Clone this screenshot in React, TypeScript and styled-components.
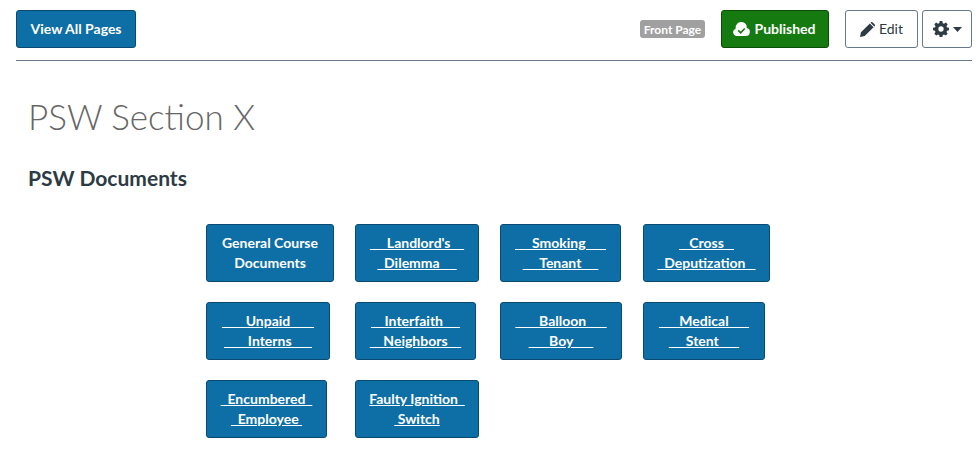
import React from 'react';
import styled, { createGlobalStyle } from 'styled-components';

const GlobalStyle = createGlobalStyle`
    html, body {
        margin: 0;
        padding: 0;
        background: #fff;
        font-family: Lato, "Helvetica Neue", Arial, sans-serif;
        color: #2d3b45;
    }
`;

const Page = styled.div`
    width: 979px;
    height: 460px;
    overflow: hidden;
    padding: 10px 7px 0 16px;
    box-sizing: border-box;
`;

const Toolbar = styled.div`
    display: flex;
    align-items: center;
    height: 50px;
    border-bottom: 1px solid #66788a;
    box-sizing: content-box;
`;

const BaseButton = styled.a`
    display: inline-flex;
    align-items: center;
    justify-content: center;
    height: 38px;
    margin-bottom: 12px;
    box-sizing: border-box;
    border-radius: 3px;
    font-size: 14px;
    line-height: 20px;
`;

const PrimaryButton = styled(BaseButton)`
    width: 120px;
    background: #0e6ea6;
    border: 1px solid #0a4a70;
    color: #fff;
    font-weight: 700;
`;

const Spacer = styled.div`
    flex: 1;
`;

const Badge = styled.span`
    display: inline-flex;
    align-items: center;
    justify-content: center;
    width: 65px;
    height: 18px;
    margin: 0 16px 12px 0;
    border-radius: 3px;
    background: #a0a0a0;
    color: #fff;
    font-size: 12px;
    font-weight: 700;
`;

const PublishedButton = styled(BaseButton)`
    width: 108px;
    gap: 5px;
    padding-right: 2px;
    margin-right: 16px;
    background: #157a10;
    border: 1px solid #0b4d08;
    color: #fff;
    font-weight: 700;
`;

const LightButton = styled(BaseButton)<{ $width: number }>`
    width: ${(p) => p.$width}px;
    gap: 4px;
    background: #fff;
    border: 1px solid #66788a;
    color: #2d3b45;
`;

const EditButton = styled(LightButton)`
    margin-right: 4px;
`;

const Content = styled.div`
    padding: 0 0 0 12px;
`;

const Title = styled.h1`
    margin: 32px 0 0;
    font-size: 35px;
    line-height: 46px;
    font-weight: 300;
    color: #666;
`;

const SubTitle = styled.h2`
    margin: 27px 0 0;
    font-size: 21px;
    line-height: 24px;
    font-weight: 700;
    color: #2d3b45;
`;

const ButtonGrid = styled.div`
    display: grid;
    grid-template-columns: 149px 145px 143px 127px;
    grid-auto-rows: 58px;
    row-gap: 20px;
    justify-items: start;
    margin: 34px 0 0 178px;
`;

const DocButton = styled.div<{ $width: number }>`
    display: flex;
    flex-direction: column;
    align-items: center;
    justify-content: center;
    width: ${(p) => p.$width}px;
    height: 58px;
    box-sizing: border-box;
    background: #0e6ea6;
    border: 1px solid #0a4a70;
    border-radius: 3px;
    color: #fff;
    font-size: 14px;
    line-height: 20px;
    font-weight: 700;
`;

const DocLine = styled.span<{ $linked: boolean }>`
    white-space: pre;
    text-decoration: ${(p) => (p.$linked ? 'underline' : 'none')};
`;

const GearIcon = () => (
    <svg width="16" height="16" viewBox="0 0 24 24" aria-hidden="true">
        <path
            fill="#2d3b45"
            fillRule="evenodd"
            d="M10 0h4l.6 3.200c.7.200 1.300.5 1.900.8l2.700-1.800 2.800 2.800L20.200 7.700c.3.600.6 1.200.8 1.900L24 10v4l-3 .5c-.2.700-.5 1.300-.8 1.900l1.800 2.700-2.800 2.800-2.700-1.800c-.6.300-1.200.6-1.900.8L14 24h-4l-.6-3.100c-.7-.2-1.300-.5-1.900-.8l-2.700 1.800L2 19.100l1.800-2.700c-.3-.6-.6-1.200-.8-1.900L0 14v-4l3-.4c.2-.7.500-1.300.8-1.900L2 5l2.800-2.800 2.700 1.800c.6-.3 1.200-.6 1.900-.8zM12 8a4 4 0 1 0 0 8 4 4 0 0 0 0-8z"
        />
    </svg>
);

const Caret = () => (
    <svg width="9" height="5" viewBox="0 0 9 5" aria-hidden="true">
        <path fill="#2d3b45" d="M0 0h9L4.500 5z" />
    </svg>
);

const PencilIcon = () => (
    <svg width="15" height="15" viewBox="0 0 16 16" aria-hidden="true">
        <path fill="#2d3b45" d="M0 16l1-5L10.500 1.500l4 4L5 15zM11.500.5a1.500 1.500 0 0 1 2.100 0l1.900 1.900a1.500 1.500 0 0 1 0 2.100l-.3.300-4-4z" />
    </svg>
);

const CloudIcon = () => (
    <svg width="17" height="14" viewBox="0 0 18 15" aria-hidden="true">
        <path fill="#fff" d="M4 15a4 4 0 0 1-1.200-7.800A6 6 0 0 1 9 0a5.500 5.500 0 0 1 5.500 6.500A4.300 4.300 0 0 1 14 15z" />
        <path fill="none" stroke="#157a10" strokeWidth="1.800" d="M5.500 9l2.600 2.500 4.400-4.500" />
    </svg>
);

type DocItem = { width: number; column: number; lines: [number, string, number][]; linked: boolean };

const docs: DocItem[] = [
    { width: 128, column: 1, linked: false, lines: [[0, 'General Course', 0], [0, 'Documents', 0]] },
    { width: 124, column: 2, linked: true, lines: [[5, "Landlord's", 4], [2, 'Dilemma', 5]] },
    { width: 121, column: 3, linked: true, lines: [[5, 'Smoking', 6], [5, 'Tenant', 5]] },
    { width: 127, column: 4, linked: true, lines: [[3, 'Cross', 3], [2, 'Deputization', 3]] },
    { width: 124, column: 1, linked: true, lines: [[7, 'Unpaid', 7], [7, 'Interns', 6]] },
    { width: 121, column: 2, linked: true, lines: [[4, 'Interfaith', 5], [4, 'Neighbors', 4]] },
    { width: 122, column: 3, linked: true, lines: [[7, 'Balloon', 6], [6, 'Boy', 6]] },
    { width: 122, column: 4, linked: true, lines: [[6, 'Medical', 6], [5, 'Stent', 6]] },
    { width: 121, column: 1, linked: true, lines: [[2, 'Encumbered', 2], [2, 'Employee', 1]] },
    { width: 124, column: 2, linked: true, lines: [[0, 'Faulty Ignition', 2], [1, 'Switch', 0]] }
];

const nbsp = (count: number) => '\u00a0'.repeat(count);

export default function App() {
    return (
        <Page>
            <GlobalStyle />
            <Toolbar>
                <PrimaryButton>View All Pages</PrimaryButton>
                <Spacer />
                <Badge>Front Page</Badge>
                <PublishedButton>
                    <CloudIcon />
                    Published
                </PublishedButton>
                <EditButton $width={73}>
                    <PencilIcon />
                    Edit
                </EditButton>
                <LightButton $width={50}>
                    <GearIcon />
                    <Caret />
                </LightButton>
            </Toolbar>
            <Content>
                <Title>PSW Section X</Title>
                <SubTitle>PSW Documents</SubTitle>
                <ButtonGrid>
                    {docs.map((doc) => (
                        <DocButton key={doc.lines[0][1]} $width={doc.width} style={{ gridColumn: doc.column }}>
                            {doc.lines.map(([before, text, after]) => (
                                <DocLine key={text} $linked={doc.linked}>
                                    {nbsp(before) + text + nbsp(after)}
                                </DocLine>
                            ))}
                        </DocButton>
                    ))}
                </ButtonGrid>
            </Content>
        </Page>
    );
}
